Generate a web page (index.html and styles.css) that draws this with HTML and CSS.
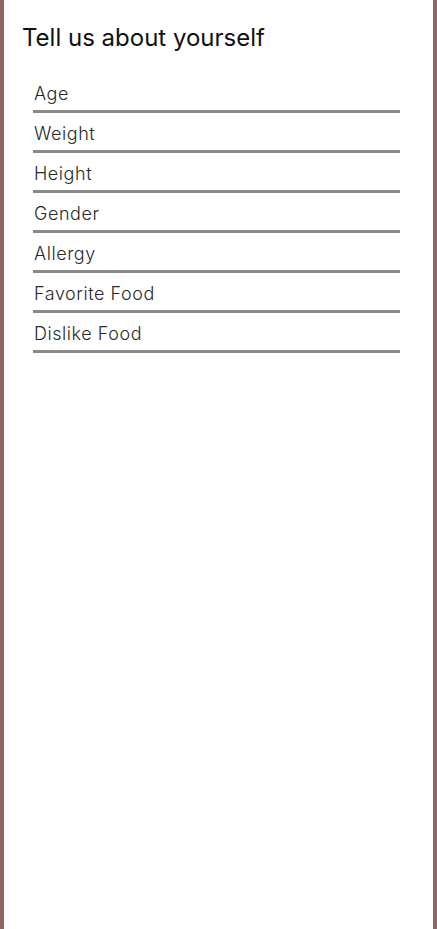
FILE: index.html
```html
<!DOCTYPE html>
<html>
<head>
<meta charset="utf-8">
<link rel="stylesheet" href="styles.css">
</head>
<body>
<div class="frame">
  <h1 class="title">Tell us about yourself</h1>
  <div class="fields">
    <div class="field">Age</div>
    <div class="field">Weight</div>
    <div class="field">Height</div>
    <div class="field">Gender</div>
    <div class="field">Allergy</div>
    <div class="field">Favorite Food</div>
    <div class="field">Dislike Food</div>
  </div>
</div>
</body>
</html>
```
FILE: styles.css
```css
html, body {
  margin: 0;
  padding: 0;
  background: #fff;
}
.frame {
  box-sizing: border-box;
  width: 437px;
  height: 929px;
  border-left: 4px solid #8f6565;
  border-right: 4px solid #8f6565;
  font-family: Inter, "Noto Sans", sans-serif;
  color: #1a1a1a;
}
.title {
  margin: 0;
  padding: 24px 0 0 18px;
  font-size: 24px;
  font-weight: 400;
  line-height: 28px;
  color: #111;
}
.fields {
  display: flex;
  flex-direction: column;
  margin: 21px 0 0 29px;
  width: 367px;
}
.field {
  height: 35px;
  padding-top: 2px;
  border-bottom: 3px solid #888;
  font-size: 18px;
  font-weight: 300;
  line-height: 37px;
  letter-spacing: 0.55px;
  padding-left: 1px;
  color: #2a2a2a;
}
```
